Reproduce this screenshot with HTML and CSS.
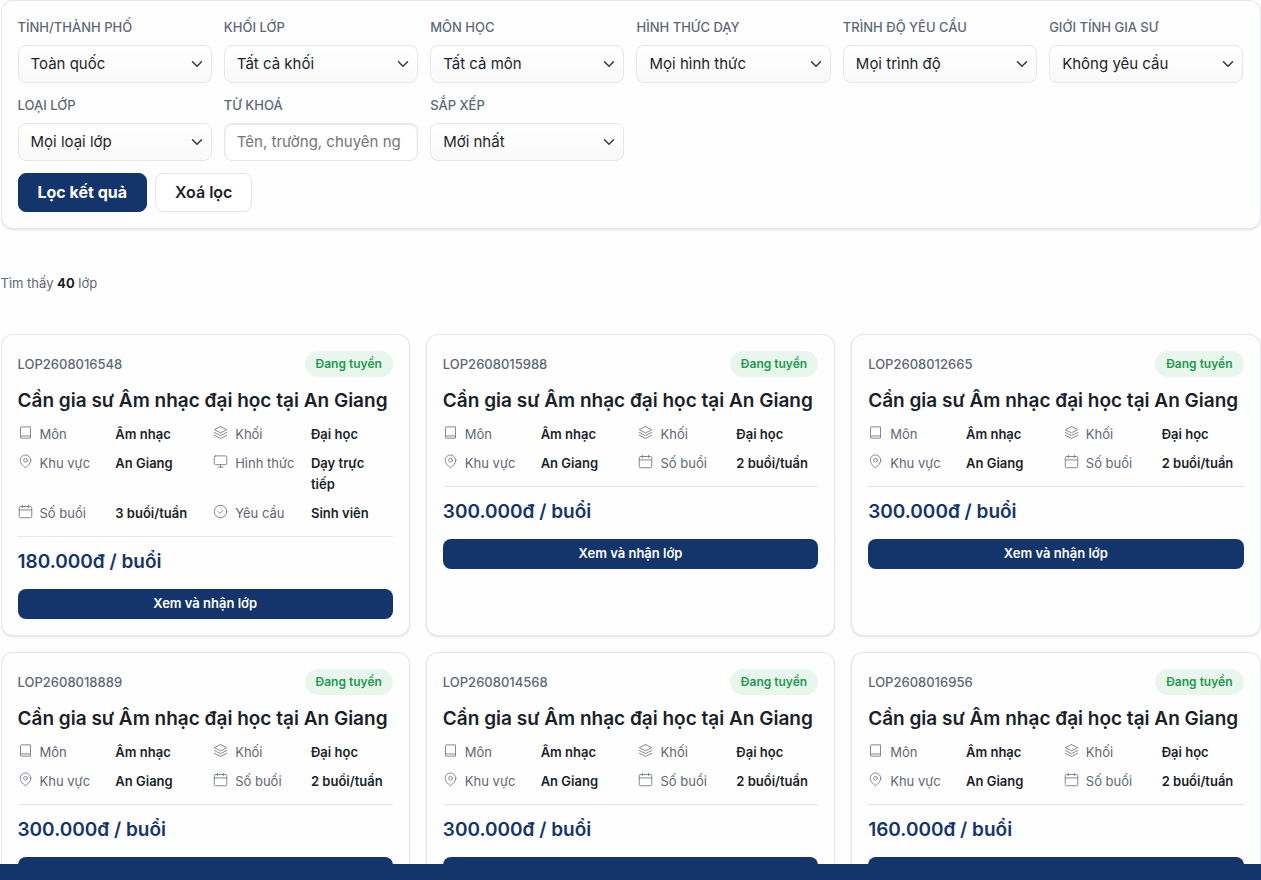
FILE: index.html
```html
<!DOCTYPE html>
<html lang="vi">
<head>
  <meta charset="UTF-8">
  <meta name="viewport" content="width=device-width, initial-scale=1">
  <title>Danh sách lớp</title>
  <link rel="stylesheet" href="styles.css">
</head>
<body>

<!-- Icons -->
<svg class="sprite" aria-hidden="true">
  <symbol id="i-book" viewBox="0 0 24 24"><path d="M4 20V4a1 1 0 0 1 1-1h15v18H5.500a1.500 1.500 0 0 1-1.500-1.500A2 2 0 0 1 6 17.500h14"/></symbol>
  <symbol id="i-layers" viewBox="0 0 24 24"><path d="M12 2.500 2 7.500l10 5 10-5-10-5zM2 12l10 5 10-5M2 16.500l10 5 10-5"/></symbol>
  <symbol id="i-pin" viewBox="0 0 24 24"><path d="M20.500 10c0 5-4.500 9-8.500 12-4-3-8.500-7-8.500-12a8.500 8.500 0 0 1 17 0z"/><circle cx="12" cy="10" r="3"/></symbol>
  <symbol id="i-screen" viewBox="0 0 24 24"><rect x="2" y="3" width="20" height="14" rx="2"/><path d="M8 21h8M12 17v4"/></symbol>
  <symbol id="i-calendar" viewBox="0 0 24 24"><rect x="2" y="4" width="20" height="18" rx="2"/><path d="M17 2v4M7 2v4M2 9.500h20"/></symbol>
  <symbol id="i-check" viewBox="0 0 24 24"><circle cx="12" cy="12" r="10"/><path d="m8 12 3 3 5-5"/></symbol>
  <symbol id="i-down" viewBox="0 0 16 16"><path d="m2 5 6 6 6-6"/></symbol>
</svg>

<main class="page">
  <form class="filter">
    <div class="filter-grid">
      <div class="field">
        <label for="city">TỈNH/THÀNH PHỐ</label>
        <div class="select"><select id="city"><option>Toàn quốc</option></select><svg><use href="#i-down"/></svg></div>
      </div>
      <div class="field">
        <label for="grade">KHỐI LỚP</label>
        <div class="select"><select id="grade"><option>Tất cả khối</option></select><svg><use href="#i-down"/></svg></div>
      </div>
      <div class="field">
        <label for="subject">MÔN HỌC</label>
        <div class="select"><select id="subject"><option>Tất cả môn</option></select><svg><use href="#i-down"/></svg></div>
      </div>
      <div class="field">
        <label for="mode">HÌNH THỨC DẠY</label>
        <div class="select"><select id="mode"><option>Mọi hình thức</option></select><svg><use href="#i-down"/></svg></div>
      </div>
      <div class="field">
        <label for="level">TRÌNH ĐỘ YÊU CẦU</label>
        <div class="select"><select id="level"><option>Mọi trình độ</option></select><svg><use href="#i-down"/></svg></div>
      </div>
      <div class="field">
        <label for="gender">GIỚI TÍNH GIA SƯ</label>
        <div class="select"><select id="gender"><option>Không yêu cầu</option></select><svg><use href="#i-down"/></svg></div>
      </div>
      <div class="field">
        <label for="type">LOẠI LỚP</label>
        <div class="select"><select id="type"><option>Mọi loại lớp</option></select><svg><use href="#i-down"/></svg></div>
      </div>
      <div class="field">
        <label for="keyword">TỪ KHOÁ</label>
        <input type="text" id="keyword" placeholder="Tên, trường, chuyên ngành">
      </div>
      <div class="field">
        <label for="sort">SẮP XẾP</label>
        <div class="select"><select id="sort"><option>Mới nhất</option></select><svg><use href="#i-down"/></svg></div>
      </div>
    </div>
    <div class="filter-actions">
      <button type="submit" class="btn btn-primary">Lọc kết quả</button>
      <button type="reset" class="btn btn-outline">Xoá lọc</button>
    </div>
  </form>

  <p class="count">Tìm thấy <strong>40</strong> lớp</p>

  <section class="cards">
    <article class="card">
      <div class="card-head"><span class="code">LOP2608016548</span><span class="badge">Đang tuyển</span></div>
      <h3>Cần gia sư Âm nhạc đại học tại An Giang</h3>
      <dl class="meta">
        <dt><svg><use href="#i-book"/></svg>Môn</dt><dd>Âm nhạc</dd>
        <dt><svg><use href="#i-layers"/></svg>Khối</dt><dd>Đại học</dd>
        <dt><svg><use href="#i-pin"/></svg>Khu vực</dt><dd>An Giang</dd>
        <dt><svg><use href="#i-screen"/></svg>Hình thức</dt><dd>Dạy trực<br>tiếp</dd>
        <dt><svg><use href="#i-calendar"/></svg>Số buổi</dt><dd>3 buổi/tuần</dd>
        <dt><svg><use href="#i-check"/></svg>Yêu cầu</dt><dd>Sinh viên</dd>
      </dl>
      <div class="price">180.000đ / buổi</div>
      <a class="card-link" href="#">Xem và nhận lớp</a>
    </article>

    <article class="card">
      <div class="card-head"><span class="code">LOP2608015988</span><span class="badge">Đang tuyển</span></div>
      <h3>Cần gia sư Âm nhạc đại học tại An Giang</h3>
      <dl class="meta">
        <dt><svg><use href="#i-book"/></svg>Môn</dt><dd>Âm nhạc</dd>
        <dt><svg><use href="#i-layers"/></svg>Khối</dt><dd>Đại học</dd>
        <dt><svg><use href="#i-pin"/></svg>Khu vực</dt><dd>An Giang</dd>
        <dt><svg><use href="#i-calendar"/></svg>Số buổi</dt><dd>2 buổi/tuần</dd>
      </dl>
      <div class="price">300.000đ / buổi</div>
      <a class="card-link" href="#">Xem và nhận lớp</a>
    </article>

    <article class="card">
      <div class="card-head"><span class="code">LOP2608012665</span><span class="badge">Đang tuyển</span></div>
      <h3>Cần gia sư Âm nhạc đại học tại An Giang</h3>
      <dl class="meta">
        <dt><svg><use href="#i-book"/></svg>Môn</dt><dd>Âm nhạc</dd>
        <dt><svg><use href="#i-layers"/></svg>Khối</dt><dd>Đại học</dd>
        <dt><svg><use href="#i-pin"/></svg>Khu vực</dt><dd>An Giang</dd>
        <dt><svg><use href="#i-calendar"/></svg>Số buổi</dt><dd>2 buổi/tuần</dd>
      </dl>
      <div class="price">300.000đ / buổi</div>
      <a class="card-link" href="#">Xem và nhận lớp</a>
    </article>

    <article class="card">
      <div class="card-head"><span class="code">LOP2608018889</span><span class="badge">Đang tuyển</span></div>
      <h3>Cần gia sư Âm nhạc đại học tại An Giang</h3>
      <dl class="meta">
        <dt><svg><use href="#i-book"/></svg>Môn</dt><dd>Âm nhạc</dd>
        <dt><svg><use href="#i-layers"/></svg>Khối</dt><dd>Đại học</dd>
        <dt><svg><use href="#i-pin"/></svg>Khu vực</dt><dd>An Giang</dd>
        <dt><svg><use href="#i-calendar"/></svg>Số buổi</dt><dd>2 buổi/tuần</dd>
      </dl>
      <div class="price">300.000đ / buổi</div>
      <a class="card-link" href="#" aria-label="Xem và nhận lớp"></a>
    </article>

    <article class="card">
      <div class="card-head"><span class="code">LOP2608014568</span><span class="badge">Đang tuyển</span></div>
      <h3>Cần gia sư Âm nhạc đại học tại An Giang</h3>
      <dl class="meta">
        <dt><svg><use href="#i-book"/></svg>Môn</dt><dd>Âm nhạc</dd>
        <dt><svg><use href="#i-layers"/></svg>Khối</dt><dd>Đại học</dd>
        <dt><svg><use href="#i-pin"/></svg>Khu vực</dt><dd>An Giang</dd>
        <dt><svg><use href="#i-calendar"/></svg>Số buổi</dt><dd>2 buổi/tuần</dd>
      </dl>
      <div class="price">300.000đ / buổi</div>
      <a class="card-link" href="#" aria-label="Xem và nhận lớp"></a>
    </article>

    <article class="card">
      <div class="card-head"><span class="code">LOP2608016956</span><span class="badge">Đang tuyển</span></div>
      <h3>Cần gia sư Âm nhạc đại học tại An Giang</h3>
      <dl class="meta">
        <dt><svg><use href="#i-book"/></svg>Môn</dt><dd>Âm nhạc</dd>
        <dt><svg><use href="#i-layers"/></svg>Khối</dt><dd>Đại học</dd>
        <dt><svg><use href="#i-pin"/></svg>Khu vực</dt><dd>An Giang</dd>
        <dt><svg><use href="#i-calendar"/></svg>Số buổi</dt><dd>2 buổi/tuần</dd>
      </dl>
      <div class="price">160.000đ / buổi</div>
      <a class="card-link" href="#" aria-label="Xem và nhận lớp"></a>
    </article>
  </section>
</main>

<footer class="bottom-bar"></footer>

</body>
</html>
```
FILE: styles.css
```css
:root {
  --navy: #14356b;
  --text: #1b1f2b;
  --muted: #5f6776;
  --line: #e3e6ea;
  --green: #219a4d;
}

* {
  box-sizing: border-box;
}

body {
  margin: 0;
  height: 100vh;
  display: flex;
  flex-direction: column;
  font-family: Inter, "Noto Sans", sans-serif;
  font-size: 15px;
  color: var(--text);
  background: #fefefe;
}

.sprite {
  display: none;
}

svg {
  fill: none;
  stroke: currentColor;
  stroke-linecap: round;
  stroke-linejoin: round;
}

.page {
  flex: 1;
  min-height: 0;
  width: 100%;
  max-width: 1260px;
  margin: 0 auto;
  overflow: hidden;
}

/* Filter */
.filter,
.card {
  background: #fefefe;
  border: 1px solid var(--line);
  border-radius: 12px;
  box-shadow: 0 1px 2px rgba(16, 24, 40, 0.12);
}

.filter {
  padding: 16px;
}

.filter-grid {
  display: grid;
  grid-template-columns: repeat(6, minmax(0, 1fr));
  gap: 12px;
}

.field label {
  display: block;
  margin-bottom: 8px;
  font-size: 13px;
  line-height: 20px;
  font-weight: 500;
  color: var(--muted);
}

.select {
  position: relative;
}

.select svg {
  position: absolute;
  right: 9px;
  top: 13px;
  width: 12px;
  height: 12px;
  color: #343a40;
  stroke-width: 2;
  pointer-events: none;
}

.field select,
.field input {
  display: block;
  width: 100%;
  height: 38px;
  padding: 0 12px 2px;
  font: inherit;
  color: var(--text);
  border: 1px solid var(--line);
  border-radius: 8px;
  background: #fff;
}

.field select {
  appearance: none;
  background: linear-gradient(#fff, #f9f9fa);
}

.field input {
  padding-right: 16px;
  box-shadow: inset 0 1px 2px rgba(0, 0, 0, 0.1);
}

.field input::placeholder {
  color: #757575;
}

.filter-actions {
  display: flex;
  gap: 8px;
  margin-top: 12px;
}

.btn {
  height: 39px;
  padding: 0 19px 2px;
  font: inherit;
  font-size: 16px;
  font-weight: 600;
  border: 1px solid var(--line);
  border-radius: 8px;
  cursor: pointer;
}

.btn-primary {
  color: #fff;
  font-weight: 700;
  background: var(--navy);
  border-color: var(--navy);
}

.btn-outline {
  color: var(--text);
  background: #fff;
}

.count {
  margin: 44px 0 40px;
  font-size: 13px;
  line-height: 21px;
  color: var(--muted);
}

.count strong {
  color: var(--text);
}

/* Class cards */
.cards {
  display: grid;
  grid-template-columns: repeat(3, minmax(0, 1fr));
  grid-auto-rows: 1fr;
  gap: 16px;
}

.card {
  display: flex;
  flex-direction: column;
  gap: 12px;
  padding: 16px;
}

.card-head {
  display: flex;
  justify-content: space-between;
  align-items: center;
}

.code {
  font-size: 13px;
  line-height: 26px;
  font-weight: 500;
  color: var(--muted);
}

.badge {
  padding: 0 11px;
  font-size: 12px;
  line-height: 26px;
  font-weight: 600;
  color: var(--green);
  background: #e8f6ee;
  border-radius: 13px;
}

.card h3 {
  margin: 0;
  font-size: 19px;
  line-height: 23px;
  font-weight: 600;
  white-space: nowrap;
}

.meta {
  display: grid;
  grid-template-columns: repeat(4, minmax(0, 1fr));
  gap: 8px 16px;
  margin: 0;
  font-size: 13px;
  line-height: 21px;
}

.meta dt {
  display: flex;
  gap: 7px;
  color: var(--muted);
  white-space: nowrap;
}

.meta svg {
  flex: none;
  width: 15px;
  height: 15px;
  margin-top: 1px;
  color: #7b828e;
  stroke-width: 1.5;
}

.meta dd {
  margin: 0;
  font-weight: 600;
}

.price {
  padding-top: 10px;
  border-top: 1px solid var(--line);
  font-size: 19px;
  line-height: 30px;
  font-weight: 600;
  color: var(--navy);
}

.card-link {
  height: 30px;
  font-size: 13px;
  line-height: 29px;
  font-weight: 600;
  text-align: center;
  text-decoration: none;
  color: #fff;
  background: var(--navy);
  border-radius: 8px;
}

.bottom-bar {
  flex: none;
  height: 16px;
  background: var(--navy);
}
```
